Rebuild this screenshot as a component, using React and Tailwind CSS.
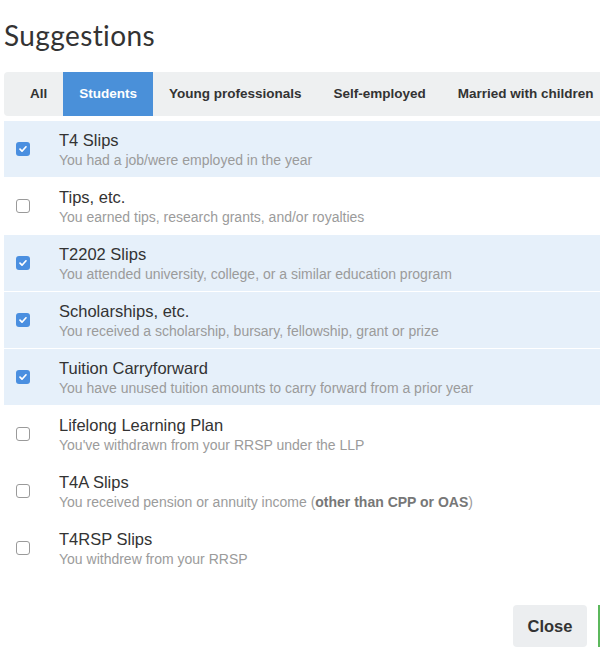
import React, { useState } from 'react';

// Suggestions dialog: category tabs + checklist of slips
const tabs = ['All', 'Students', 'Young professionals', 'Self-employed', 'Married with children'];

const items = [
  { title: 'T4 Slips', desc: 'You had a job/were employed in the year', checked: true },
  { title: 'Tips, etc.', desc: 'You earned tips, research grants, and/or royalties', checked: false },
  { title: 'T2202 Slips', desc: 'You attended university, college, or a similar education program', checked: true },
  { title: 'Scholarships, etc.', desc: 'You received a scholarship, bursary, fellowship, grant or prize', checked: true },
  { title: 'Tuition Carryforward', desc: 'You have unused tuition amounts to carry forward from a prior year', checked: true },
  { title: 'Lifelong Learning Plan', desc: "You've withdrawn from your RRSP under the LLP", checked: false },
  {
    title: 'T4A Slips',
    desc: (
      <>
        You received pension or annuity income (<b className="font-bold text-[#777]">other than CPP or OAS</b>)
      </>
    ),
    checked: false,
  },
  { title: 'T4RSP Slips', desc: 'You withdrew from your RRSP', checked: false },
];

const Checkbox = ({ checked }) =>
  checked ? (
    <span className="flex h-[14px] w-[14px] items-center justify-center rounded-[3px] bg-[#4a8fe0]">
      <svg width="10" height="10" viewBox="0 0 10 10" fill="none">
        <path d="M2 5.2l2 2 4-4.4" stroke="white" strokeWidth="1.7" strokeLinecap="round" strokeLinejoin="round" />
      </svg>
    </span>
  ) : (
    <span className="h-[14px] w-[14px] rounded-[3px] border border-[#9a9a9a] bg-white" />
  );

const App = () => {
  const [active, setActive] = useState('Students');

  return (
    <div className="h-[654px] w-[600px] overflow-hidden bg-white font-['Liberation_Sans',Arial,sans-serif]">
      <h1 className="pl-[4px] pt-[17px] font-['Lato',sans-serif] text-[28px] leading-[36px] tracking-[0.4px] text-[#333]">
        Suggestions
      </h1>

      {/* Tabs */}
      <div className="ml-[4px] mt-[19px] flex h-[44px] w-[620px] items-stretch rounded-l-[4px] bg-[#eef0f1] pl-[10px]">
        {tabs.map((t) => (
          <button
            key={t}
            onClick={() => setActive(t)}
            className={`px-[16px] text-[13.5px] font-bold whitespace-nowrap ${
              active === t ? 'bg-[#4a90d9] text-white' : 'text-[#333]'
            }`}
          >
            {t}
          </button>
        ))}
      </div>

      {/* Items */}
      <div className="mt-[5px] ml-[4px] flex flex-col">
        {items.map((it) => (
          <div
            key={it.title}
            className={`flex h-[57px] items-center border-b border-white ${it.checked ? 'bg-[#e6f0fa]' : 'bg-white'}`}
          >
            <div className="flex w-[55px] pl-[12px]">
              <Checkbox checked={it.checked} />
            </div>
            <div className="flex flex-col">
              <span className="text-[16.5px] leading-[20px] text-[#333]">{it.title}</span>
              <span className="mt-[1px] text-[14px] leading-[18px] text-[#9b9b9b]">{it.desc}</span>
            </div>
          </div>
        ))}
      </div>

      {/* Footer */}
      <div className="mt-[28px] flex justify-end gap-[11px]">
        <button className="h-[42px] w-[74px] rounded-[4px] bg-[#eceef0] text-[16.5px] font-bold text-[#333]">
          Close
        </button>
        <span className="h-[42px] w-[2px] bg-[#5cb85c]" />
      </div>
    </div>
  );
};

export default App;
